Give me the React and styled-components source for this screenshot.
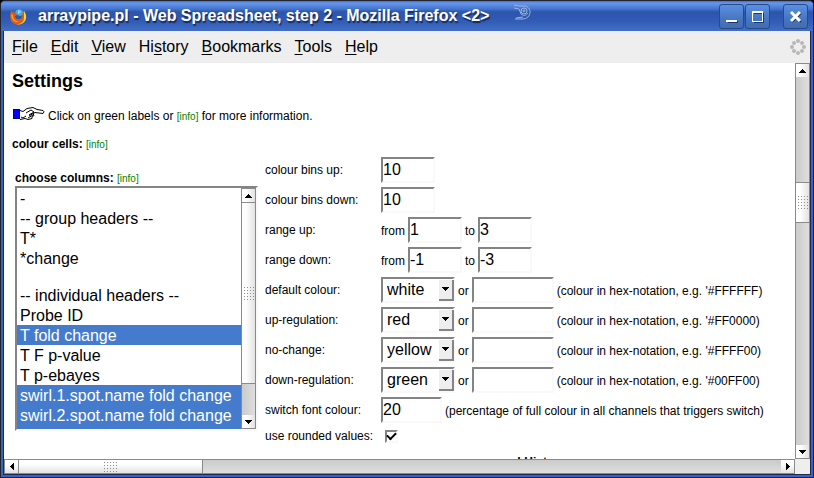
import { useState } from "react";
import styled, { createGlobalStyle, css } from "styled-components";

const GlobalStyle = createGlobalStyle`
  * {
    box-sizing: border-box;
  }

  body {
    margin: 0;
    background: #000;
    color: #000;
    font-family: "Liberation Sans", Arial, sans-serif;
    font-size: 12px;
    line-height: 14px;
  }

  button,
  input,
  select {
    margin: 0;
    padding: 0;
    color: inherit;
    font-family: inherit;
    outline: none;
  }
`;

const sunken = css`
  border: 2px solid;
  border-color: #848484 #f9f9f9 #f9f9f9 #848484;
  border-radius: 0;
  background: #fff;
`;

const Window = styled.div`
  display: flex;
  flex-direction: column;
  height: 100vh;
  border: 1px solid #22252e;
  border-radius: 5px 5px 0 0;
  background: #3366c4;
  overflow: hidden;
`;

const TitleBar = styled.header`
  display: flex;
  align-items: center;
  flex: none;
  height: 30px;
  padding: 0 5px 0 9px;
  background: linear-gradient(
    #3f6fc8 0,
    #6897ee 2px,
    #4474cc 8px,
    #2c55ab 11px,
    #315bb5 20px,
    #426fc4 30px
  );
`;

const Title = styled.h1`
  margin: 0 24px 0 11px;
  color: #fff;
  font-size: 16px;
  line-height: 20px;
  white-space: nowrap;
  text-shadow: 1px 2px 1px #16295c;
`;

const Swirl = styled.svg`
  align-self: flex-start;
  margin-top: 3px;
`;

const WindowButtons = styled.div`
  display: flex;
  gap: 1px;
  margin-left: auto;
`;

const WindowButton = styled.button`
  display: grid;
  place-items: center;
  width: 25px;
  height: 25px;
  margin-left: ${({ $apart }) => ($apart ? 12 : 0)}px;
  border: 1px solid #294a88;
  border-radius: 3px;
  background: linear-gradient(#5b8fe2, #4677c2 60%, #426cae);
`;

const Client = styled.div`
  display: flex;
  flex-direction: column;
  flex: 1;
  min-height: 0;
  margin: 0 2px 2px;
  border: solid #20294a;
  border-width: 0 1px 1px;
  background: #eee;
`;

const MenuBar = styled.nav`
  display: flex;
  align-items: center;
  flex: none;
  gap: 13px;
  height: 32px;
  padding: 0 4px 0 8px;
`;

const MenuButton = styled.button`
  border: 0;
  background: none;
  font-size: 16px;
  line-height: 20px;

  u {
    text-underline-offset: 2px;
    text-decoration-thickness: 1px;
    text-decoration-skip-ink: none;
  }
`;

const Throbber = styled.svg`
  margin-left: auto;
`;

const Viewport = styled.div`
  display: grid;
  grid-template-columns: minmax(0, 1fr) 15px;
  grid-template-rows: minmax(0, 1fr) 15px;
  flex: 1;
  min-height: 0;
`;

const Page = styled.main`
  padding: 8px 8px 0;
  background: #fff;
  overflow: hidden;
`;

const Bar = styled.div`
  display: flex;
  flex: none;
  flex-direction: ${({ $across }) => ($across ? "row" : "column")};
  width: ${({ $across }) => ($across ? "auto" : "15px")};
  height: ${({ $across }) => ($across ? "15px" : "auto")};
  border: 1px solid #8a8a8a;
  background: linear-gradient(
    ${({ $across }) => ($across ? "to bottom" : "to right")},
    #cbcbcb,
    #dedede
  );
`;

const raised = css`
  background: linear-gradient(
    ${({ $across }) => ($across ? "to bottom" : "to right")},
    #fff 30%,
    #e2e2e2
  );
`;

const BarButton = styled.button`
  display: grid;
  place-items: center;
  flex: none;
  width: 13px;
  height: 13px;
  border: 0;
  ${raised}
`;

const BarSpace = styled.div`
  flex: ${({ $size }) => $size} 1 0;
`;

const Thumb = styled.div`
  display: grid;
  place-items: center;
  flex: ${({ $size }) => $size} 1 0;
  border: solid #8a8a8a;
  border-width: ${({ $across }) => ($across ? "0 1px" : "1px 0")};
  ${raised}
`;

const Heading = styled.h2`
  margin: 0;
  font-size: 18px;
  line-height: 20px;
`;

const Note = styled.p`
  display: flex;
  align-items: center;
  gap: 3px;
  margin: 15px 0 0;
  height: 20px;
  white-space: pre;
`;

const Hand = styled.svg`
  align-self: flex-start;
`;

const InfoLink = styled.a`
  color: #008000;
  font-size: 10px;
  font-weight: normal;
  text-decoration: none;
`;

const Subheading = styled.h3`
  margin: 11px 0 0;
  font-size: 12px;
  line-height: 14px;
`;

const Settings = styled.form`
  display: flex;
  gap: 7px;
  margin-top: 3px;
  padding-left: 3px;
`;

const ColumnPicker = styled.div`
  display: flex;
  flex-direction: column;
  flex: none;
  width: 243px;
  padding-top: 16px;
`;

const PickerLabel = styled.div`
  font-weight: bold;
`;

const ListFrame = styled.div`
  ${sunken}
  display: flex;
  height: 245px;
`;

const ListBox = styled.select`
  flex: 1;
  min-width: 0;
  border: 0;
  border-radius: 0;
  background: #fff;
  font-size: 16px;
  overflow: hidden;

  option {
    height: 20px;
    min-height: 0;
    padding: 2px 3px 0;
  }

  option:empty {
    height: 17px;
  }

  option:checked {
    background: #447bcd linear-gradient(#447bcd, #447bcd);
    -webkit-text-fill-color: #fff;
  }
`;

const Fields = styled.div`
  flex: 1;
  min-width: 0;
`;

const Row = styled.div`
  display: grid;
  grid-template-columns: 116px 1fr;
  align-items: center;
  height: ${({ $short }) => ($short ? 22 : 30)}px;
  white-space: nowrap;
`;

const Cell = styled.div`
  display: flex;
  align-items: baseline;
  gap: 3px;
`;

const TextBox = styled.input`
  ${sunken}
  width: ${({ $width }) => $width || 54}px;
  height: 26px;
  font-size: 16px;
`;

const SelectBox = styled.span`
  position: relative;
  width: 74px;
  height: 26px;
`;

const DropDown = styled.select`
  ${sunken}
  appearance: none;
  width: 100%;
  height: 26px;
  padding-left: 4px;
  font-size: 16px;
`;

const DropArrow = styled.span`
  position: absolute;
  top: 3px;
  right: 1px;
  display: grid;
  place-items: center;
  width: 15px;
  height: 21px;
  border: solid #848484;
  border-width: 0 2px 2px 0;
  background: #eee;
  pointer-events: none;
`;

const CheckBox = styled.input`
  ${sunken}
  appearance: none;
  display: grid;
  place-items: center;
  width: 13px;
  height: 13px;
  margin-left: 4px;

  &:checked::before {
    content: "";
    width: 7px;
    height: 4px;
    border: solid #000;
    border-width: 0 0 2px 2px;
    transform: translateY(-1px) rotate(-45deg);
  }
`;

const NextHeading = styled.h3`
  margin: 8px 0 0;
  padding-left: 505px;
  font-size: 12px;
  white-space: nowrap;
`;

const menus = [
  ["", "F", "ile"],
  ["", "E", "dit"],
  ["", "V", "iew"],
  ["Hi", "s", "tory"],
  ["", "B", "ookmarks"],
  ["", "T", "ools"],
  ["", "H", "elp"],
];

const columns = [
  "-",
  "-- group headers --",
  "T*",
  "*change",
  "",
  "-- individual headers --",
  "Probe ID",
  "T fold change",
  "T F p-value",
  "T p-ebayes",
  "swirl.1.spot.name fold change",
  "swirl.2.spot.name fold change",
  "swirl.3.spot.name fold change",
];

const colourRows = [
  { label: "default colour:", colour: "white", hex: "#FFFFFF" },
  { label: "up-regulation:", colour: "red", hex: "#FF0000" },
  { label: "no-change:", colour: "yellow", hex: "#FFFF00" },
  { label: "down-regulation:", colour: "green", hex: "#00FF00" },
];

const arrows = {
  up: "M3 0h1v1h1v1h1v1h1v1H0V3h1V2h1V1h1z",
  down: "M0 0h7v1H6v1H5v1H4v1H3V3H2V2H1V1H0z",
  left: "M0 3h1V2h1V1h1V0h1v7H3V6H2V5H1V4H0z",
  right: "M0 0h1v1h1v1h1v1h1v1H3v1H2v1H1v1H0z",
};

function Arrow({ to }) {
  const upright = to === "up" || to === "down";
  return (
    <svg
      width={upright ? 7 : 4}
      height={upright ? 4 : 7}
      shapeRendering="crispEdges"
      aria-hidden="true"
    >
      <path d={arrows[to]} />
    </svg>
  );
}

function Grip({ across }) {
  const cols = across ? 5 : 4;
  const rows = across ? 4 : 5;
  const dots = [];
  for (let x = 0; x < cols; x++) {
    for (let y = 0; y < rows; y++) {
      dots.push(
        <rect key={`${x}-${y}`} x={x * 3} y={y * 3} width="1" height="1" />
      );
    }
  }
  return (
    <svg
      width={cols * 3 - 2}
      height={rows * 3 - 2}
      fill="#8e8e8e"
      shapeRendering="crispEdges"
      aria-hidden="true"
    >
      {dots}
    </svg>
  );
}

function ScrollBar({ across, before, size, after }) {
  const [start, end] = across ? ["left", "right"] : ["up", "down"];
  return (
    <Bar $across={across}>
      <BarButton type="button" $across={across} aria-label={`Scroll ${start}`}>
        <Arrow to={start} />
      </BarButton>
      <BarSpace $size={before} />
      <Thumb $across={across} $size={size}>
        <Grip across={across} />
      </Thumb>
      <BarSpace $size={after} />
      <BarButton type="button" $across={across} aria-label={`Scroll ${end}`}>
        <Arrow to={end} />
      </BarButton>
    </Bar>
  );
}

function FirefoxIcon() {
  return (
    <svg width="17" height="17" viewBox="0 0 17 17" aria-hidden="true">
      <circle cx="8.5" cy="8.5" r="7" fill="#1d62a8" />
      <path d="M6 2l4-1 4 3-1 3-3 1-3-1-2-2z" fill="#4aa6dd" />
      <path d="M8 2l3 1-1 2-2 1z" fill="#9bd5ee" />
      <path
        d="M1 3l2 1 2-1-1 2 2 1 1 1-2 1c0 2 2 4 5 3 2-1 3-3 2-6l2 1V3c3 4 3 9-1 12-4 3-9 2-12-2C0 10 0 6 1 3z"
        fill="#e25a18"
      />
      <path
        d="M14 3c3 4 3 9-1 12-2 1-4 2-6 1 4 0 7-2 7-6V3z"
        fill="#fbd23c"
      />
      <path d="M1 6l2 1c0 4 2 6 6 7-4 1-8-2-8-8z" fill="#f59a26" />
    </svg>
  );
}

function HandIcon() {
  return (
    <Hand width="33" height="15" viewBox="0 -1 33 15" aria-hidden="true">
      <rect x="1.5" y="2.5" width="6" height="9" fill="#00f" stroke="#000080" />
      <path
        d="M8 3.5l3 1 4-3 6-1 4 2 6 1q2 1 0 3l-8-1-2 1 1 2-2 1v2l-4 1-3-1-5 1"
        fill="#fff"
        stroke="#000"
      />
      <path
        d="M14 6l5-3 3 2-5 3M17 9l5-3M16 11l5-3M9 10l2 1 3-2"
        fill="none"
        stroke="#000"
      />
    </Hand>
  );
}

function Info() {
  return <InfoLink href="#info">[info]</InfoLink>;
}

function Field({ id, label, short, children }) {
  return (
    <Row $short={short}>
      <label htmlFor={id}>{label}</label>
      <Cell>{children}</Cell>
    </Row>
  );
}

function ColourField({ label, colour, hex }) {
  const [value, setValue] = useState(colour);
  const id = `colour-${colour}`;
  return (
    <Field id={id} label={label}>
      <SelectBox>
        <DropDown
          id={id}
          value={value}
          onChange={(event) => setValue(event.target.value)}
        >
          {colourRows.map((row) => (
            <option key={row.colour}>{row.colour}</option>
          ))}
        </DropDown>
        <DropArrow>
          <Arrow to="down" />
        </DropArrow>
      </SelectBox>
      <label htmlFor={`${id}-hex`}>or</label>
      <TextBox id={`${id}-hex`} $width={82} />
      <span>(colour in hex-notation, e.g. '{hex})</span>
    </Field>
  );
}

function RangeField({ id, label, from, to }) {
  return (
    <Row>
      <span>{label}</span>
      <Cell>
        <label htmlFor={`${id}-from`}>from</label>
        <TextBox id={`${id}-from`} defaultValue={from} />
        <label htmlFor={`${id}-to`}>to</label>
        <TextBox id={`${id}-to`} defaultValue={to} />
      </Cell>
    </Row>
  );
}

export default function App() {
  const [selected, setSelected] = useState([
    "T fold change",
    "swirl.1.spot.name fold change",
    "swirl.2.spot.name fold change",
    "swirl.3.spot.name fold change",
  ]);

  const handleSelect = (event) => {
    setSelected(
      Array.from(event.target.selectedOptions, (option) => option.value)
    );
  };

  return (
    <>
      <GlobalStyle />
      <Window>
        <TitleBar>
          <FirefoxIcon />
          <Title>arraypipe.pl - Web Spreadsheet, step 2 - Mozilla Firefox &lt;2&gt;</Title>
          <Swirl
            width="18"
            height="17"
            viewBox="0 0 18 17"
            fill="none"
            stroke="#9db4de"
            aria-hidden="true"
          >
            <path d="M1 1l5 1 6 0c4 1 5 4 5 6 0 4-3 7-8 7l-7 0M1 4l5 1 2 5c2 2 5 2 7-1M3 14l7-1" />
            <circle cx="11" cy="7" r="3" />
            <circle cx="11" cy="7" r="1" />
          </Swirl>
          <WindowButtons>
            <WindowButton aria-label="Minimize">
              <svg width="13" height="13">
                <path d="M3 12h11" stroke="#1d3468" strokeWidth="2" />
                <path d="M1 11h11" stroke="#fff" strokeWidth="2" />
              </svg>
            </WindowButton>
            <WindowButton aria-label="Maximize">
              <svg width="13" height="13" fill="none">
                <path d="M3 3.5h8M12.5 3v10M3 12.5h10" stroke="#1d3468" />
                <rect x="1.5" y="1.5" width="10" height="10" stroke="#fff" />
                <path d="M1 2h11" stroke="#fff" strokeWidth="2" />
              </svg>
            </WindowButton>
            <WindowButton $apart aria-label="Close">
              <svg width="13" height="13" fill="none" strokeWidth="2">
                <path d="M3 3l9 9M12 3l-9 9" stroke="#1d3468" />
                <path d="M2 2l9 9M11 2l-9 9" stroke="#fff" strokeWidth="3" />
              </svg>
            </WindowButton>
          </WindowButtons>
        </TitleBar>
        <Client>
          <MenuBar>
            {menus.map(([before, key, after]) => (
              <MenuButton key={before + key + after}>
                {before}
                <u>{key}</u>
                {after}
              </MenuButton>
            ))}
            <Throbber width="16" height="16" fill="#b7b7b7" aria-hidden="true">
              <circle cx="8" cy="2" r="2" />
              <circle cx="12" cy="4" r="2" />
              <circle cx="14" cy="8" r="2" />
              <circle cx="12" cy="12" r="2" />
              <circle cx="8" cy="14" r="2" />
              <circle cx="4" cy="12" r="2" />
              <circle cx="2" cy="8" r="2" />
              <circle cx="4" cy="4" r="2" />
            </Throbber>
          </MenuBar>
          <Viewport>
            <Page>
              <Heading>Settings</Heading>
              <Note>
                <HandIcon />
                <span>
                  Click on green labels or <Info /> for more information.
                </span>
              </Note>
              <Subheading>
                colour cells: <Info />
              </Subheading>
              <Settings>
                <ColumnPicker>
                  <PickerLabel>
                    <label htmlFor="columns">choose columns:</label> <Info />
                  </PickerLabel>
                  <ListFrame>
                    <ListBox
                      id="columns"
                      multiple
                      value={selected}
                      onChange={handleSelect}
                    >
                      {columns.map((column) => (
                        <option key={column} value={column}>
                          {column}
                        </option>
                      ))}
                    </ListBox>
                    <ScrollBar before={0} size={181} after={31} />
                  </ListFrame>
                </ColumnPicker>
                <Fields>
                  <Field id="bins-up" label="colour bins up:">
                    <TextBox id="bins-up" defaultValue="10" />
                  </Field>
                  <Field id="bins-down" label="colour bins down:">
                    <TextBox id="bins-down" defaultValue="10" />
                  </Field>
                  <RangeField id="up" label="range up:" from="1" to="3" />
                  <RangeField id="down" label="range down:" from="-1" to="-3" />
                  {colourRows.map((row) => (
                    <ColourField key={row.colour} {...row} />
                  ))}
                  <Field id="switch" label="switch font colour:">
                    <TextBox id="switch" defaultValue="20" $width={61} />
                    <span>
                      (percentage of full colour in all channels that triggers
                      switch)
                    </span>
                  </Field>
                  <Field id="rounded" label="use rounded values:" short>
                    <CheckBox id="rounded" type="checkbox" defaultChecked />
                  </Field>
                </Fields>
              </Settings>
              <NextHeading>! Hist</NextHeading>
            </Page>
            <ScrollBar before={105} size={39} after={222} />
            <ScrollBar across before={0} size={183} after={577} />
          </Viewport>
        </Client>
      </Window>
    </>
  );
}
